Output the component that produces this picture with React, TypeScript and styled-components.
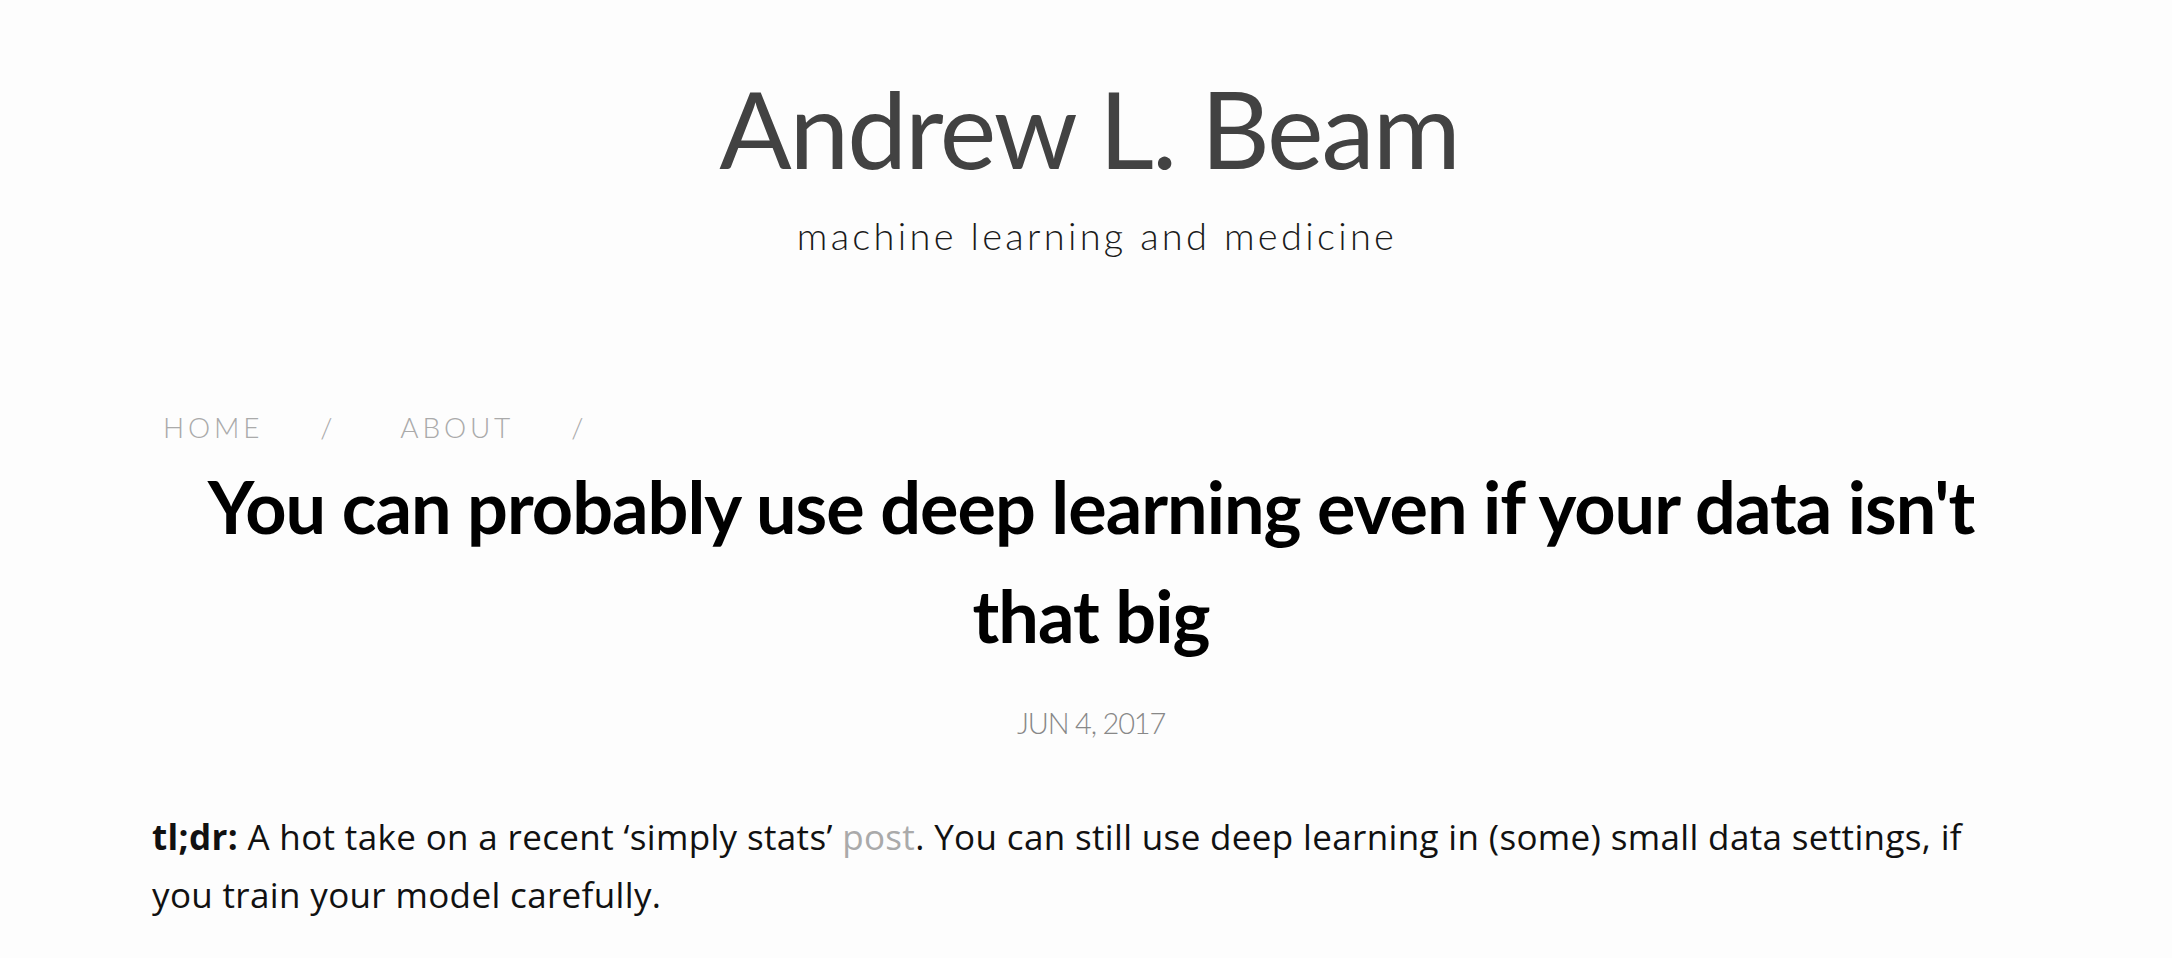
import React from 'react';
import styled, { createGlobalStyle } from 'styled-components';

const GlobalStyle = createGlobalStyle`
  html, body {
    margin: 0;
    padding: 0;
    background-color: #fdfdfd;
  }
  body {
    font-family: 'Lato', 'Liberation Sans', sans-serif;
  }
`;

const Page = styled.div`
  min-height: 958px;
`;

const Masthead = styled.header`
  padding-top: 64px;
  text-align: center;
`;

const SiteTitle = styled.div`
  padding-left: 6px;
  font-family: 'Lato', sans-serif;
  font-size: 107px;
  line-height: 1.2;
  font-weight: 400;
  letter-spacing: -2px;
  color: #424242;
`;

const Tagline = styled.div`
  margin-top: 21px;
  padding-left: 22px;
  font-family: 'Lato', sans-serif;
  font-size: 38px;
  line-height: 1.2;
  font-weight: 300;
  letter-spacing: 3.3px;
  color: #1a1a1a;
`;

const Container = styled.main`
  width: 1878px;
  margin: 0 0 0 152px;
`;

const Nav = styled.nav`
  margin-top: 151px;
  padding-left: 11px;
  display: flex;
  align-items: baseline;
  font-family: 'Lato', sans-serif;
  font-weight: 300;
  font-size: 28px;
  line-height: 35px;
  color: #aaa;
`;

const NavLink = styled.a`
  letter-spacing: 3.8px;
  color: inherit;
  text-decoration: none;
  margin-right: 57px;
`;

const NavSep = styled.span`
  margin-right: 68px;
`;

const PostTitle = styled.h1`
  margin: 7px 0 0;
  text-align: center;
  font-family: 'Lato', sans-serif;
  font-weight: 700;
  font-size: 72px;
  line-height: 109px;
  letter-spacing: -1px;
  color: #000;
`;

const PostDate = styled.div`
  margin-top: 34px;
  text-align: center;
  font-family: 'Lato', sans-serif;
  font-weight: 300;
  font-size: 29px;
  line-height: 37px;
  letter-spacing: -1.2px;
  color: #888;
`;

const Body = styled.p`
  margin: 67px 0 0;
  padding-right: 40px;
  font-family: 'Open Sans', 'Lato', sans-serif;
  font-size: 35px;
  line-height: 58px;
  letter-spacing: 0.35px;
  color: #111;

  strong {
    font-weight: 700;
  }
  a {
    color: #aaa;
    text-decoration: none;
  }
`;

const App = () => {
  return (
    <Page>
      <GlobalStyle />
      <Masthead>
        <SiteTitle>Andrew L. Beam</SiteTitle>
        <Tagline>machine learning and medicine</Tagline>
      </Masthead>
      <Container>
        <Nav>
          <NavLink href="#">HOME</NavLink>
          <NavSep>/</NavSep>
          <NavLink href="#">ABOUT</NavLink>
          <NavSep>/</NavSep>
        </Nav>
        <PostTitle>You can probably use deep learning even if your data isn't that big</PostTitle>
        <PostDate>JUN 4, 2017</PostDate>
        <Body>
          <strong>tl;dr:</strong> A hot take on a recent ‘simply stats’ <a href="#">post</a>
          {'. You can still use deep learning in (some) small data settings, if '}
          {'you train your model carefully.'}
        </Body>
      </Container>
    </Page>
  );
};

export default App;
